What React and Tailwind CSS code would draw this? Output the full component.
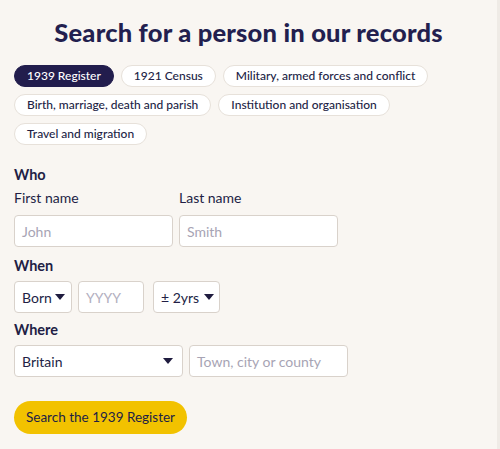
const pills = [
    '1939 Register',
    '1921 Census',
    'Military, armed forces and conflict',
    'Birth, marriage, death and parish',
    'Institution and organisation',
    'Travel and migration',
];

function Caret() {
    return (
        <svg width="10" height="6" viewBox="0 0 10 6" className="shrink-0">
            <path d="M0 0h10L5 6z" fill="#1f1c3f" />
        </svg>
    );
}

const boxCls = 'h-[32px] rounded-[4px] border border-[#d9d2cb] bg-white';

export default function App() {
    return (
        <div
            className="min-h-[449px] w-[500px] border-r-[3px] border-[#efebe6] bg-[#f9f6f2] text-[#221e45]"
            style={{ fontFamily: 'Lato, "Open Sans", sans-serif' }}
        >
            <div className="px-[14px] pt-[15px]">
                <h1 className="text-center text-[25.5px] font-black leading-[34px] tracking-[0.2px] text-[#231f4f]">
                    Search for a person in our records
                </h1>

                <div className="mt-[16px] flex flex-wrap gap-x-[7px] gap-y-[7px]">
                    {pills.map((p, i) => (
                        <span
                            key={p}
                            className={
                                i === 0
                                    ? 'flex h-[22px] items-center rounded-full border border-[#221d4d] bg-[#221d4d] px-[12px] text-[12px] font-medium text-white'
                                    : 'flex h-[22px] items-center rounded-full border border-[#e7e1da] bg-white px-[12px] text-[12px] font-medium text-[#221e45]'
                            }
                        >
                            {p}
                        </span>
                    ))}
                </div>

                <div className="mt-[21px] text-[14.5px] font-bold leading-[18px]">Who</div>
                <div className="mt-[5px] flex gap-[6px]">
                    <div className="w-[159px]">
                        <div className="text-[14px] leading-[18px]">First name</div>
                        <div className={`mt-[8px] flex items-center px-[7px] text-[14px] text-[#a7a4b4] ${boxCls}`}>John</div>
                    </div>
                    <div className="w-[159px]">
                        <div className="text-[14px] leading-[18px]">Last name</div>
                        <div className={`mt-[8px] flex items-center px-[7px] text-[14px] text-[#a7a4b4] ${boxCls}`}>Smith</div>
                    </div>
                </div>

                <div className="mt-[10px] text-[14.5px] font-bold leading-[18px]">When</div>
                <div className="mt-[6px] flex">
                    <div className={`flex w-[58px] items-center gap-[3px] whitespace-nowrap px-[7px] text-[14px] ${boxCls}`}>
                        Born <Caret />
                    </div>
                    <div className={`ml-[6px] flex w-[66px] items-center px-[7px] text-[14px] text-[#b3b0bf] ${boxCls}`}>YYYY</div>
                    <div className={`ml-[9px] flex w-[67px] items-center gap-[5px] whitespace-nowrap px-[7px] text-[14px] ${boxCls}`}>
                        ± 2yrs <Caret />
                    </div>
                </div>

                <div className="mt-[8px] text-[14.5px] font-bold leading-[18px]">Where</div>
                <div className="mt-[6px] flex gap-[6px]">
                    <div className={`flex w-[169px] items-center justify-between px-[7px] text-[14px] ${boxCls}`}>
                        Britain <span className="mr-[2px]"><Caret /></span>
                    </div>
                    <div className={`flex w-[159px] items-center px-[7px] text-[14px] text-[#a7a4b4] ${boxCls}`}>
                        Town, city or county
                    </div>
                </div>

                <button
                    type="button"
                    className="mt-[24px] h-[33px] rounded-full bg-[#f2c200] px-[12px] text-[13.5px] text-[#221e45]"
                >
                    Search the 1939 Register
                </button>
            </div>
        </div>
    );
}
